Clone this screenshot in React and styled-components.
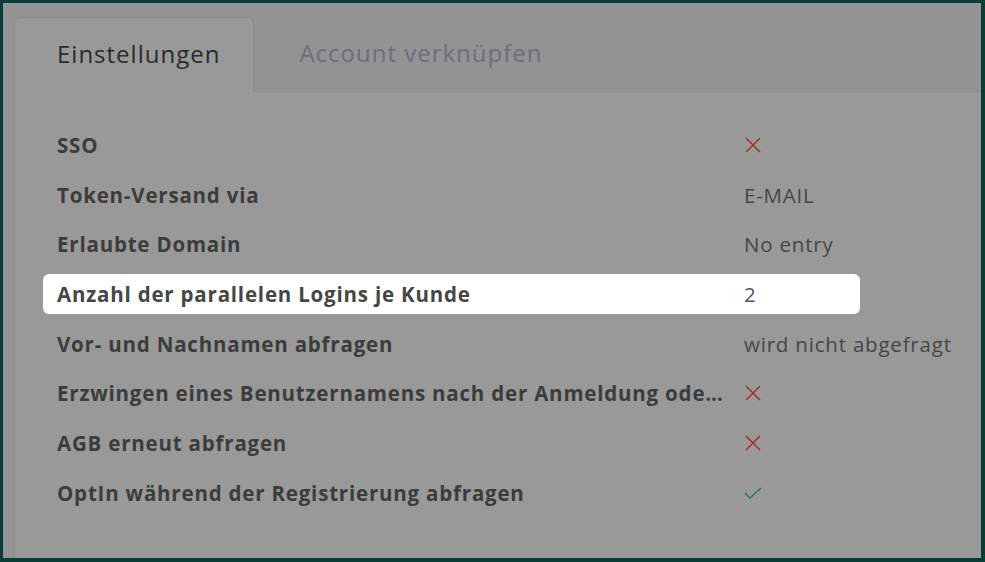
import React from 'react'
import styled, { createGlobalStyle } from 'styled-components'

const GlobalStyle = createGlobalStyle`
  html, body {
    margin: 0;
    padding: 0;
    background: #073d35;
  }
  body {
    font-family: "Open Sans", "Noto Sans", sans-serif;
  }
`

const Frame = styled.div`
  width: 985px;
  height: 562px;
  box-sizing: border-box;
  padding: 3px 4px 4px 3px;
  background: #073d35;
`

const Page = styled.div`
  height: 100%;
  box-sizing: border-box;
  padding: 14px 0 0 11px;
  background: #939393;
  display: flex;
  flex-direction: column;
  overflow: hidden;
`

const TabBar = styled.div`
  display: flex;
  align-items: flex-start;
  height: 74px;
  position: relative;
  z-index: 1;
`

const Tab = styled.div`
  display: flex;
  align-items: center;
  box-sizing: border-box;
  height: ${p => (p.active ? '75px' : '74px')};
  padding: ${p => (p.active ? '0 33px 4px 42px' : '0 44px 4px')};
  font-size: 24px;
  letter-spacing: 1px;
  color: ${p => (p.active ? '#2b2b2b' : '#6a7079')};
  background: ${p => (p.active ? '#999999' : 'transparent')};
  border: 1px solid ${p => (p.active ? '#8b8b8b' : 'transparent')};
  border-bottom: none;
  border-radius: 6px 6px 0 0;
`

const Panel = styled.div`
  flex: 1;
  background: #999999;
  border-top: 1px solid #8b8b8b;
  border-left: 1px solid #8b8b8b;
  padding: 33px 0 0 28px;
  display: flex;
  flex-direction: column;
  gap: 9.7px;
`

const Row = styled.div`
  display: flex;
  align-items: center;
  width: 817px;
  height: 40px;
  box-sizing: border-box;
  padding-left: 14px;
  border-radius: 6px;
  background: ${p => (p.highlighted ? '#ffffff' : 'transparent')};
`

const Label = styled.div`
  width: 672px;
  margin-right: 15px;
  flex-shrink: 0;
  font-size: 20.5px;
  letter-spacing: 0.8px;
  font-weight: 700;
  color: ${p => (p.highlighted ? '#464646' : '#3c3c3c')};
  white-space: nowrap;
  overflow: hidden;
  text-overflow: ellipsis;
`

const Value = styled.div`
  font-size: 20.5px;
  letter-spacing: 0.8px;
  font-weight: 400;
  color: ${p => (p.highlighted ? '#555555' : '#464646')};
  white-space: nowrap;
  display: flex;
  align-items: center;
`

const CrossIcon = () => (
  <svg width="18" height="18" viewBox="0 0 18 18">
    <path d="M2 2 L16 16 M16 2 L2 16" stroke="#9a3036" strokeWidth="1.5" fill="none" />
  </svg>
)

const CheckIcon = () => (
  <svg width="18" height="18" viewBox="0 0 18 18">
    <path d="M1 9 L6 14 L17 4" stroke="#2b7a45" strokeWidth="1.5" fill="none" />
  </svg>
)

const settings = [
  { label: 'SSO', value: 'no' },
  { label: 'Token-Versand via', value: 'E-MAIL' },
  { label: 'Erlaubte Domain', value: 'No entry' },
  { label: 'Anzahl der parallelen Logins je Kunde', value: '2', highlighted: true },
  { label: 'Vor- und Nachnamen abfragen', value: 'wird nicht abgefragt' },
  { label: 'Erzwingen eines Benutzernamens nach der Anmeldung oder Registrierung', value: 'no' },
  { label: 'AGB erneut abfragen', value: 'no' },
  { label: 'OptIn während der Registrierung abfragen', value: 'yes' },
]

const renderValue = value => {
  if (value === 'no') return <CrossIcon />
  if (value === 'yes') return <CheckIcon />
  return value
}

const App = () => (
  <>
    <GlobalStyle />
    <Frame>
      <Page>
        <TabBar>
          <Tab active>Einstellungen</Tab>
          <Tab>Account verknüpfen</Tab>
        </TabBar>
        <Panel>
          {settings.map(s => (
            <Row key={s.label} highlighted={s.highlighted}>
              <Label highlighted={s.highlighted} title={s.label}>{s.label}</Label>
              <Value highlighted={s.highlighted}>{renderValue(s.value)}</Value>
            </Row>
          ))}
        </Panel>
      </Page>
    </Frame>
  </>
)

export default App
